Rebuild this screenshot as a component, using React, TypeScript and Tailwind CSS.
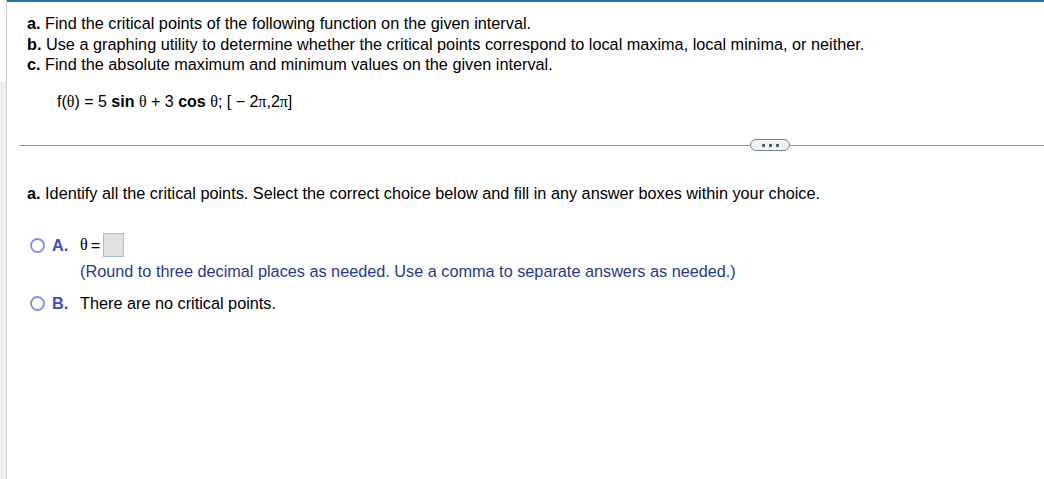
import React from "react";

const Radio = () => (
  <span className="inline-block w-[15px] h-[15px] rounded-full border-2 border-[#8395d9] bg-white shrink-0" />
);

const Theta = () => <span className="font-['Liberation_Serif',serif] text-[16px]">θ</span>;
const Pi = () => <span className="font-['Liberation_Serif',serif] text-[16px]">π</span>;

export default function App() {
  return (
    <div className="flex w-[1044px] h-[479px] bg-white text-black font-['Liberation_Sans',Arial,sans-serif] text-[16.25px] overflow-hidden">
      <div className="w-[7px] flex flex-col border-r border-[#c7cdd9] shrink-0">
        <div className="h-[82px] bg-white" />
        <div className="flex-1 bg-[#efefef]" />
      </div>

      <div className="flex-1 flex flex-col border-t-2 border-[#1b7ba2]">
        <div className="pl-[20px] pt-[11px] leading-[20.5px]">
          <p>
            <b>a.</b> Find the critical points of the following function on the given interval.
          </p>
          <p>
            <b>b.</b> Use a graphing utility to determine whether the critical points correspond to local maxima, local minima, or neither.
          </p>
          <p>
            <b>c.</b> Find the absolute maximum and minimum values on the given interval.
          </p>
          <p className="pl-[30px] mt-[17px] text-[16px]">
            f(<Theta />) = 5 <b>sin</b> <Theta /> + 3 <b>cos</b> <Theta />; [ − 2<Pi />,2<Pi />]
          </p>
        </div>

        <div className="flex items-center mt-[27px] pl-[12px]">
          <div className="w-[731px] h-px bg-[#8b93a2]" />
          <div className="w-[40px] h-[12px] rounded-full border border-[#7d8696] bg-[#eef1f5] flex items-center justify-center gap-[4px]">
            <span className="w-[3px] h-[3px] bg-[#555d6b]" />
            <span className="w-[3px] h-[3px] bg-[#555d6b]" />
            <span className="w-[3px] h-[3px] bg-[#555d6b]" />
          </div>
          <div className="flex-1 h-px bg-[#8b93a2]" />
        </div>

        <div className="pl-[20px] mt-[32px] leading-5">
          <p>
            <b>a.</b> Identify all the critical points. Select the correct choice below and fill in any answer boxes within your choice.
          </p>

          <div className="flex mt-[30px] pl-[3px]">
            <div className="flex items-center gap-[7px] h-[24px]">
              <Radio />
              <span className="font-bold text-[#3a4ec2] w-[28px]">A.</span>
            </div>
            <div className="flex flex-col">
              <div className="flex items-center h-[24px] gap-[3px]">
                <Theta />
                <span>=</span>
                <span className="inline-block w-[21px] h-[24px] bg-[#e1e1e1] border border-[#a9bbe4]" />
              </div>
              <p className="text-[#1f3a8f] mt-[4px]">
                (Round to three decimal places as needed. Use a comma to separate answers as needed.)
              </p>
            </div>
          </div>

          <div className="flex items-center mt-[12px] pl-[3px] h-[20px]">
            <div className="flex items-center gap-[7px]">
              <Radio />
              <span className="font-bold text-[#3a4ec2] w-[28px]">B.</span>
            </div>
            <span>There are no critical points.</span>
          </div>
        </div>
      </div>
    </div>
  );
}
